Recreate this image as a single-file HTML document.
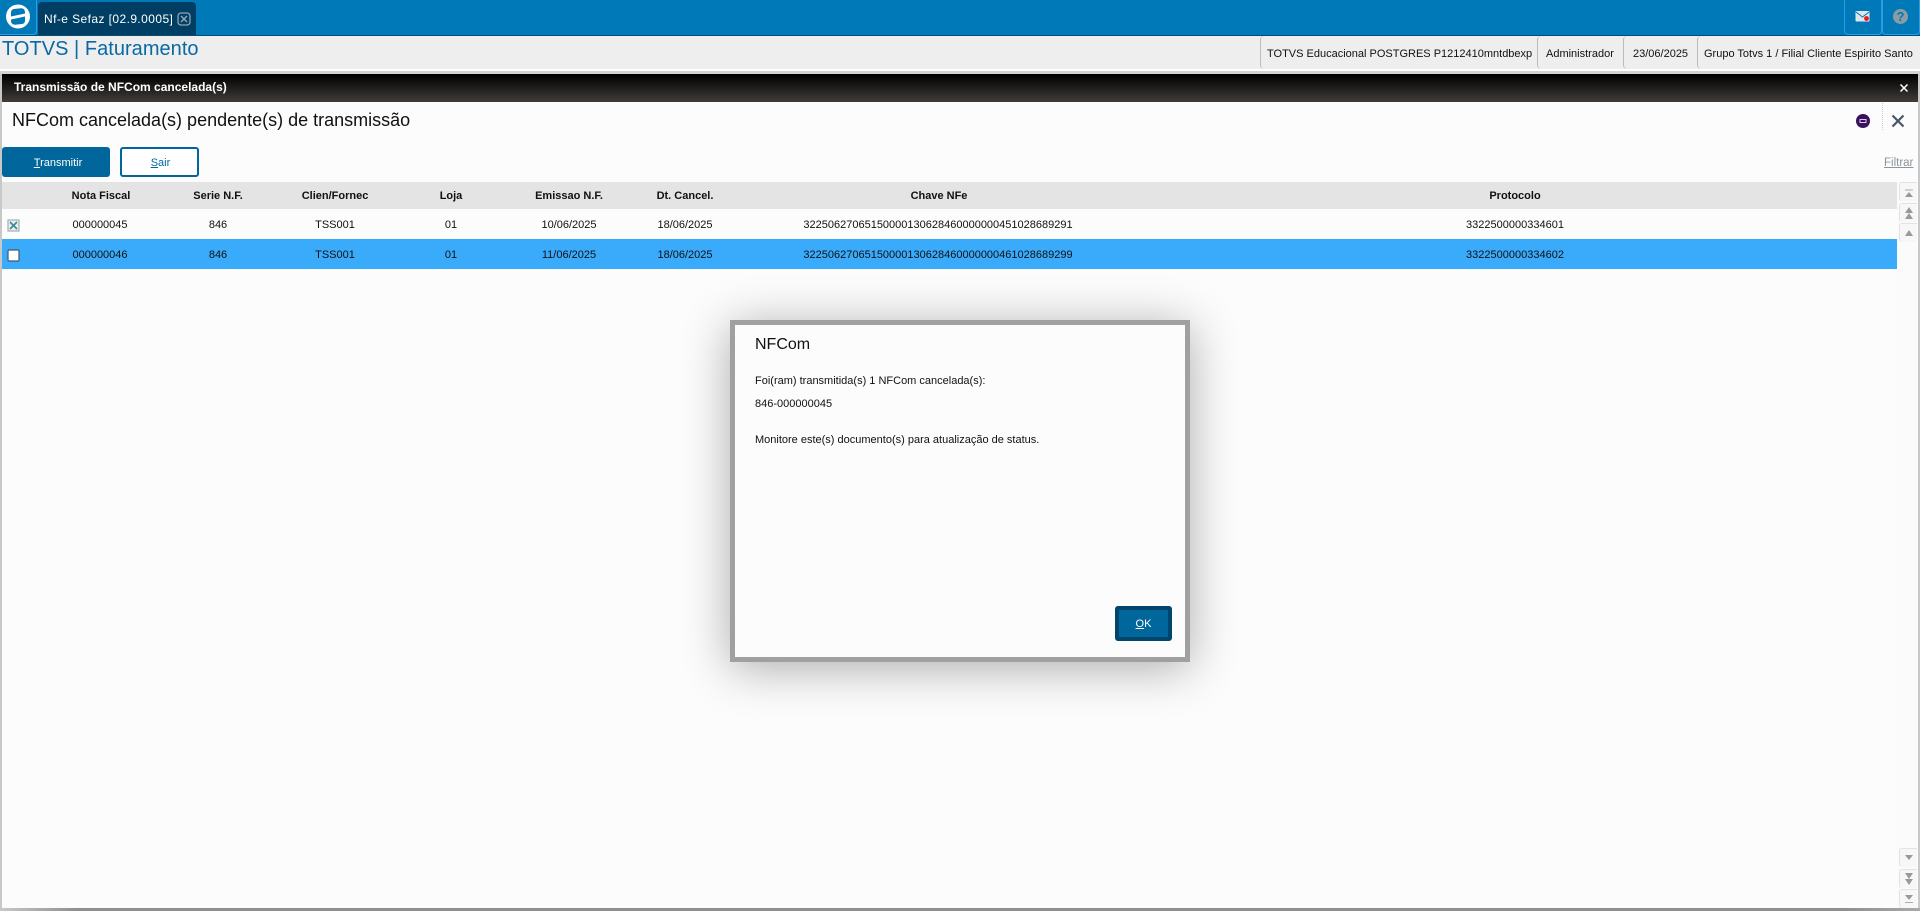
<!DOCTYPE html>
<html lang="pt"><head><meta charset="utf-8"><title>TOTVS | Faturamento</title>
<style>
html,body{margin:0;padding:0;width:1920px;height:911px;overflow:hidden;background:#fff;font-family:"Liberation Sans",sans-serif;color:#111}
.a{position:absolute}
.t{position:absolute;white-space:nowrap}
.c{position:absolute;white-space:nowrap;transform:translateX(-50%);font-size:11px}
.h{font-weight:bold;top:190px}
.r1{top:219px}.r2{top:249px}
.sb{position:absolute;left:1899px;width:18px;height:19px;background:#f7f7f7;border:1px solid #e2e2e2;border-right:0;border-bottom:0;box-sizing:border-box;border-radius:3px 0 0 3px}
.sb svg{position:absolute;left:3px;top:3px}
.cell{position:absolute;top:36px;height:33px;border-left:1px solid #bbb;border-radius:4px 0 0 4px;font-size:11px;line-height:36px;white-space:nowrap}
</style></head><body>
<!-- top bar -->
<div class="a" style="left:0;top:0;width:1920px;height:35px;background:#0079b8;border-bottom:1px solid #004d76"></div>
<div class="a" style="left:0;top:0;width:37px;height:35px;box-sizing:border-box;border:1px solid #2e9be6;border-top:0;border-left:0;border-radius:0 0 4px 0"></div>
<svg class="a" style="left:6px;top:4px" width="24" height="25" viewBox="0 0 24 25"><circle cx="12" cy="12.500" r="12" fill="#fff"/><path d="M5 12.500V8.500Q5 5.500 8 5L15 4.300Q19 4.300 19 8.500V9.500Z" fill="#0079b8"/><path d="M19 12.500V16.500Q19 19.500 16 20L9 20.700Q5 20.700 5 16.500V15.500Z" fill="#0079b8"/></svg>
<div class="a" style="left:38px;top:2px;width:158px;height:33px;background:#003f63;border-radius:4px 4px 0 0"></div>
<div class="t" style="left:44px;top:12px;font-size:12px;color:#fff;letter-spacing:.42px">Nf-e Sefaz [02.9.0005]</div>
<svg class="a" style="left:177px;top:12px" width="14" height="14" viewBox="0 0 14 14"><rect x="1" y="1" width="12" height="12" rx="3" fill="none" stroke="#8ea5b4" stroke-width="1.300"/><path d="M4 4L10 10M10 4L4 10" stroke="#8ea5b4" stroke-width="1.500"/></svg>
<div class="a" style="left:1844px;top:0;width:38px;height:35px;box-sizing:border-box;border:1px solid #2e9be6;border-top:0;border-radius:0 0 4px 4px"></div>
<div class="a" style="left:1882px;top:0;width:38px;height:35px;box-sizing:border-box;border:1px solid #2e9be6;border-top:0;border-radius:0 0 4px 4px"></div>
<svg class="a" style="left:1855px;top:10px" width="16" height="13" viewBox="0 0 16 13"><rect x="0.500" y="1" width="14" height="10.500" rx="1" fill="#dfe6ea"/><path d="M1 2L7.500 7L14 2" fill="none" stroke="#0079b8" stroke-width="1"/><circle cx="11.500" cy="8.500" r="2.400" fill="#f4101c"/></svg>
<div class="a" style="left:1893px;top:9px;width:15px;height:15px;border-radius:50%;background:#8d9ba5;color:#0079b8;font:bold 13px/15px 'Liberation Sans',sans-serif;text-align:center">?</div>
<!-- header -->
<div class="a" style="left:0;top:36px;width:1920px;height:33px;background:#eee"></div>
<div class="t" style="left:2px;top:38px;font-size:20px;color:#0a69a3;letter-spacing:.03px">TOTVS | Faturamento</div>
<div class="cell" style="left:1260px;width:277px;padding-left:6px;box-sizing:border-box">TOTVS Educacional POSTGRES P1212410mntdbexp</div>
<div class="cell" style="left:1537px;width:86px;padding-left:8px;box-sizing:border-box">Administrador</div>
<div class="cell" style="left:1623px;width:74px;padding-left:9px;box-sizing:border-box">23/06/2025</div>
<div class="cell" style="left:1697px;padding-left:6px">Grupo Totvs 1 / Filial Cliente Espirito Santo</div>
<!-- window -->
<div class="a" style="left:0;top:71px;width:1920px;height:840px;background:#c8c8c8"></div>
<div class="a" style="left:0;top:71px;width:1920px;height:3px;background:#d4d4d4"></div>
<div class="a" style="left:2px;top:74px;width:1916px;height:834px;background:#fcfcfc"></div>
<div class="a" style="left:0;top:908px;width:1920px;height:3px;background:linear-gradient(90deg,#c8c8c8,#8f8f8f 4%,#8f8f8f 96%,#aaa)"></div>
<div class="a" style="left:2px;top:74px;width:1916px;height:28px;background:linear-gradient(#000,#403c39)"></div>
<div class="t" style="left:14px;top:80px;font-size:12px;font-weight:bold;color:#fff">Transmissão de NFCom cancelada(s)</div>
<svg class="a" style="left:1899px;top:83px" width="10" height="10" viewBox="0 0 10 10"><path d="M1.500 1.500L8.500 8.500M8.500 1.500L1.500 8.500" stroke="#fff" stroke-width="1.500"/></svg>
<div class="t" style="left:12px;top:110px;font-size:18px;color:#111">NFCom cancelada(s) pendente(s) de transmissão</div>
<svg class="a" style="left:1855px;top:113px" width="16" height="16" viewBox="0 0 16 16"><circle cx="8" cy="8" r="7" fill="#3a1160"/><rect x="5" y="6.500" width="6" height="3" fill="none" stroke="#d8cfe6" stroke-width="1"/></svg>
<div class="a" style="left:1882px;top:103px;height:27px;border-left:1px dotted #c6d0d8"></div>
<svg class="a" style="left:1890px;top:113px" width="16" height="16" viewBox="0 0 16 16"><path d="M2.500 2.500L13.500 13.500M13.500 2.500L2.500 13.500" stroke="#46566a" stroke-width="2.200"/></svg>
<!-- buttons -->
<div class="a" style="left:2px;top:147px;width:108px;height:30px;background:#00669c;border-radius:3px;color:#fff;font-size:11px;line-height:33px;text-align:center;padding-left:4px;box-sizing:border-box"><u>T</u>ransmitir</div>
<div class="a" style="left:120px;top:147px;width:79px;height:30px;box-sizing:border-box;border:2px solid #00669c;border-radius:3px;background:#fff;color:#00669c;font-size:11px;line-height:29px;text-align:center;padding-left:2px"><u>S</u>air</div>
<div class="t" style="left:1884px;top:157px;font-size:11.500px;color:#8b949b;text-decoration:underline">Filtrar</div>
<!-- table -->
<div class="a" style="left:2px;top:182px;width:1895px;height:27px;background:#e4e4e4"></div>
<div class="c h" style="left:101px">Nota Fiscal</div>
<div class="c h" style="left:218px">Serie N.F.</div>
<div class="c h" style="left:335px">Clien/Fornec</div>
<div class="c h" style="left:451px">Loja</div>
<div class="c h" style="left:569px">Emissao N.F.</div>
<div class="c h" style="left:685px">Dt. Cancel.</div>
<div class="c h" style="left:939px">Chave NFe</div>
<div class="c h" style="left:1515px">Protocolo</div>
<div class="a" style="left:2px;top:239px;width:1895px;height:30px;background:#3aabfb"></div>
<svg class="a" style="left:7px;top:219px" width="13" height="13" viewBox="0 0 13 13"><rect x="1" y="1" width="11" height="11" fill="#e9eef0" stroke="#a4aeb2" stroke-width="1.200"/><path d="M3 3L10 10M10 3L3 10" stroke="#3c8a90" stroke-width="1.600"/></svg>
<svg class="a" style="left:7px;top:249px" width="13" height="13" viewBox="0 0 13 13"><rect x="1" y="1" width="11" height="11" rx="1" fill="#fff" stroke="#44586a" stroke-width="1.200"/></svg>
<div class="c r1" style="left:100px">000000045</div><div class="c r1" style="left:218px">846</div><div class="c r1" style="left:335px">TSS001</div><div class="c r1" style="left:451px">01</div><div class="c r1" style="left:569px">10/06/2025</div><div class="c r1" style="left:685px">18/06/2025</div><div class="c r1" style="left:938px">32250627065150000130628460000000451028689291</div><div class="c r1" style="left:1515px">3322500000334601</div>
<div class="c r2" style="left:100px">000000046</div><div class="c r2" style="left:218px">846</div><div class="c r2" style="left:335px">TSS001</div><div class="c r2" style="left:451px">01</div><div class="c r2" style="left:569px">11/06/2025</div><div class="c r2" style="left:685px">18/06/2025</div><div class="c r2" style="left:938px">32250627065150000130628460000000461028689299</div><div class="c r2" style="left:1515px">3322500000334602</div>
<!-- scrollbar -->
<div class="a" style="left:1897px;top:182px;width:21px;height:726px;background:#fbfbfb"></div>
<div class="sb" style="top:182px"><svg width="12" height="14" viewBox="0 0 12 14"><path d="M2 4H10" stroke="#aaa"/><path d="M6 6L10 11H2Z" fill="#999"/></svg></div>
<div class="sb" style="top:203px"><svg width="12" height="13" viewBox="0 0 12 13"><path d="M6 0L10 6H2Z" fill="#999"/><path d="M6 6L10 12H2Z" fill="#999"/></svg></div>
<div class="sb" style="top:223px"><svg width="12" height="13" viewBox="0 0 12 13"><path d="M6 3L10 9H2Z" fill="#999"/></svg></div>
<div class="sb" style="top:848px"><svg width="12" height="13" viewBox="0 0 12 13"><path d="M2 3H10L6 8Z" fill="#999"/></svg></div>
<div class="sb" style="top:869px"><svg width="12" height="13" viewBox="0 0 12 13"><path d="M2 0H10L6 6Z" fill="#999"/><path d="M2 6H10L6 12Z" fill="#999"/></svg></div>
<div class="sb" style="top:889px"><svg width="12" height="13" viewBox="0 0 12 13"><path d="M2 2H10L6 7Z" fill="#999"/><path d="M2 9.500H10" stroke="#aaa"/></svg></div>
<!-- dialog -->
<div class="a" style="left:730px;top:320px;width:460px;height:342px;box-sizing:border-box;border:5px solid #a0a0a0;background:#fcfcfc;box-shadow:0 6px 45px rgba(0,0,0,.32)"></div>
<div class="t" style="left:755px;top:336px;font-size:16px">NFCom</div>
<div class="t" style="left:755px;top:375px;font-size:11px">Foi(ram) transmitida(s) 1 NFCom cancelada(s):</div>
<div class="t" style="left:755px;top:398px;font-size:11px">846-000000045</div>
<div class="t" style="left:755px;top:434px;font-size:11px">Monitore este(s) documento(s) para atualização de status.</div>
<div class="a" style="left:1115px;top:606px;width:57px;height:35px;box-sizing:border-box;border:4px solid #00456b;border-radius:3px;background:#00669c;color:#fff;font-size:11px;line-height:29px;text-align:center"><u>O</u>K</div>
</body></html>
